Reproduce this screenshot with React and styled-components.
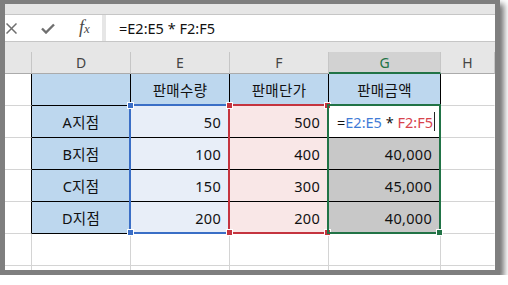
import styled, { createGlobalStyle } from "styled-components";

const GlobalStyle = createGlobalStyle`
  body {
    margin: 0;
    background: #fff;
    font-family: "Noto Sans", "Noto Sans CJK KR", sans-serif;
  }
`;

const GRID = "#d4d4d4";
const BLACK = "#000";
const GREEN = "#217346";
const HEAD_BG = "#bdd7ee";

const columns = ["D", "E", "F", "G", "H"];

const rows = [
  { label: "A지점", qty: "50", price: "500", total: null },
  { label: "B지점", qty: "100", price: "400", total: "40,000" },
  { label: "C지점", qty: "150", price: "300", total: "45,000" },
  { label: "D지점", qty: "200", price: "200", total: "40,000" },
];

const App = () => {
  return (
    <>
      <GlobalStyle />
      <Frame>
        <TopBand />
        <FormulaRow>
          <IconArea>
            <svg width="11" height="11" viewBox="0 0 11 11">
              <path d="M0.5 0.5 L10.5 10.5 M10.5 0.5 L0.5 10.5" stroke="#6f6f6f" strokeWidth="1.5" fill="none" />
            </svg>
            <svg width="14" height="11" viewBox="0 0 14 11">
              <path d="M1 5.5 L5 9.5 L13 1.5" stroke="#6f6f6f" strokeWidth="2.4" fill="none" />
            </svg>
            <Fx>
              f<span>x</span>
            </Fx>
          </IconArea>
          <FormulaInput>=E2:E5 * F2:F5</FormulaInput>
        </FormulaRow>
        <Gap />
        <Sheet>
          <ColHead $c={1} />
          {columns.map((c, i) => (
            <ColHead key={c} $c={i + 2} $active={c === "G"}>
              {c}
            </ColHead>
          ))}

          <Cell $r={2} $c={1} $right={BLACK} />
          <Cell $r={2} $c={2} $bg={HEAD_BG} $right={BLACK} $bottom={BLACK} />
          <Cell $r={2} $c={3} $bg={HEAD_BG} $right={BLACK} $bottom={BLACK}>판매수량</Cell>
          <Cell $r={2} $c={4} $bg={HEAD_BG} $right={BLACK} $bottom={BLACK}>판매단가</Cell>
          <Cell $r={2} $c={5} $bg={HEAD_BG} $right={BLACK} $bottom={BLACK}>판매금액</Cell>
          <Cell $r={2} $c={6} $right="transparent" />

          {rows.map((r, i) => (
            <Row key={r.label} row={r} r={i + 3} />
          ))}

          {[7, 8].map((r) =>
            [1, 2, 3, 4, 5, 6].map((c) => (
              <Cell key={`${r}-${c}`} $r={r} $c={c} $right={c === 6 ? "transparent" : GRID} />
            ))
          )}

          <RangeBox $col={3} $color="#3a6ec6">
            <Handle $color="#3a6ec6" $v="top" $h="left" />
            <Handle $color="#3a6ec6" $v="bottom" $h="left" />
          </RangeBox>
          <RangeBox $col={4} $color="#c5343f">
            <Handle $color="#c5343f" $v="top" $h="left" />
            <Handle $color="#c5343f" $v="bottom" $h="left" />
            <Handle $color="#c5343f" $v="top" $h="right" />
            <Handle $color="#c5343f" $v="bottom" $h="right" />
          </RangeBox>
          <RangeBox $col={5} $color={GREEN}>
            <Handle $color={GREEN} $v="bottom" $h="right" />
          </RangeBox>
        </Sheet>
      </Frame>
    </>
  );
};

const Row = ({ row, r }) => (
  <>
    <Cell $r={r} $c={1} $right={BLACK} />
    <Cell $r={r} $c={2} $bg={HEAD_BG} $right={BLACK} $bottom={BLACK}>
      {row.label}
    </Cell>
    <Cell $r={r} $c={3} $bg="#e8eef8" $right={BLACK} $bottom={BLACK} $align="flex-end">
      {row.qty}
    </Cell>
    <Cell $r={r} $c={4} $bg="#f9e7e7" $right={BLACK} $bottom={BLACK} $align="flex-end">
      {row.price}
    </Cell>
    {row.total ? (
      <Cell $r={r} $c={5} $bg="#c8c8c8" $right={BLACK} $bottom={BLACK} $align="flex-end">
        {row.total}
      </Cell>
    ) : (
      <Cell $r={r} $c={5} $bg="#fff" $right={BLACK} $bottom={BLACK} $align="flex-start">
        <Edit>
          =<Ref $c="#3f7bd6">E2:E5</Ref> * <Ref $c="#d8434d">F2:F5</Ref>
          <Caret />
        </Edit>
      </Cell>
    )}
    <Cell $r={r} $c={6} $right="transparent" />
  </>
);

const Frame = styled.div`
  width: 490px;
  height: 266px;
  border-style: solid;
  border-color: #7f7f7f;
  border-width: 4px 5px 5px 5px;
  box-shadow: 4px 4px 6px rgba(0, 0, 0, 0.55);
  background: #fff;
  overflow: hidden;
  display: flex;
  flex-direction: column;
`;

const TopBand = styled.div`
  flex: none;
  height: 10px;
  background: #e6e6e6;
  border-bottom: 1px solid #c6c6c6;
`;

const FormulaRow = styled.div`
  flex: none;
  height: 26px;
  display: flex;
  gap: 4px;
  background: #e6e6e6;
  border-bottom: 1px solid #c6c6c6;
`;

const IconArea = styled.div`
  width: 97px;
  background: #fff;
  display: flex;
  align-items: center;
  gap: 24px;
  padding-left: 1px;
  box-sizing: border-box;
`;

const Fx = styled.div`
  font-family: "Liberation Serif", serif;
  font-style: italic;
  font-size: 18px;
  color: #4a4a4a;
  line-height: 1;
  margin-top: -2px;
  span {
    font-size: 13px;
  }
`;

const FormulaInput = styled.div`
  flex: 1;
  background: #fff;
  display: flex;
  align-items: center;
  padding-left: 13px;
  font-size: 14.5px;
  color: #111;
`;

const Gap = styled.div`
  flex: none;
  height: 10px;
  background: #e6e6e6;
`;

const Sheet = styled.div`
  flex: none;
  display: grid;
  grid-template-columns: 27px 99px 99px 99px 112px 1fr;
  grid-template-rows: 22px repeat(7, 32px);
  font-size: 14.5px;
  color: #111;
`;

const ColHead = styled.div`
  grid-row: 1;
  grid-column: ${(p) => p.$c};
  box-sizing: border-box;
  display: flex;
  align-items: center;
  justify-content: center;
  background: ${(p) => (p.$active ? "#d2d2d2" : "#e6e6e6")};
  color: ${(p) => (p.$active ? GREEN : "#444")};
  border-right: 1px solid #c6c6c6;
  border-bottom: ${(p) => (p.$active ? `2px solid ${GREEN}` : "1px solid #ababab")};
  font-size: 14px;
`;

const Cell = styled.div`
  grid-row: ${(p) => p.$r};
  grid-column: ${(p) => p.$c};
  box-sizing: border-box;
  display: flex;
  align-items: center;
  justify-content: ${(p) => p.$align || "center"};
  padding: 0 8px;
  background: ${(p) => p.$bg || "#fff"};
  border-right: 1px solid ${(p) => p.$right || GRID};
  border-bottom: 1px solid ${(p) => p.$bottom || GRID};
  white-space: nowrap;
  letter-spacing: 0.3px;
`;

const Edit = styled.div`
  display: flex;
  align-items: center;
  white-space: pre;
  letter-spacing: 0;
`;

const Ref = styled.span`
  color: ${(p) => p.$c};
`;

const Caret = styled.span`
  display: inline-block;
  width: 1px;
  height: 19px;
  margin-left: 1px;
  background: #222;
`;

const RangeBox = styled.div`
  grid-column: ${(p) => p.$col};
  grid-row: 3 / 7;
  position: relative;
  margin: -2px 0 0 -2px;
  border: 2px solid ${(p) => p.$color};
  pointer-events: none;
  z-index: 1;
`;

const Handle = styled.div`
  position: absolute;
  ${(p) => p.$v}: -4px;
  ${(p) => p.$h}: -4px;
  width: 5px;
  height: 5px;
  background: ${(p) => p.$color};
  border: 1px solid #fff;
  z-index: 3;
`;

export default App;
